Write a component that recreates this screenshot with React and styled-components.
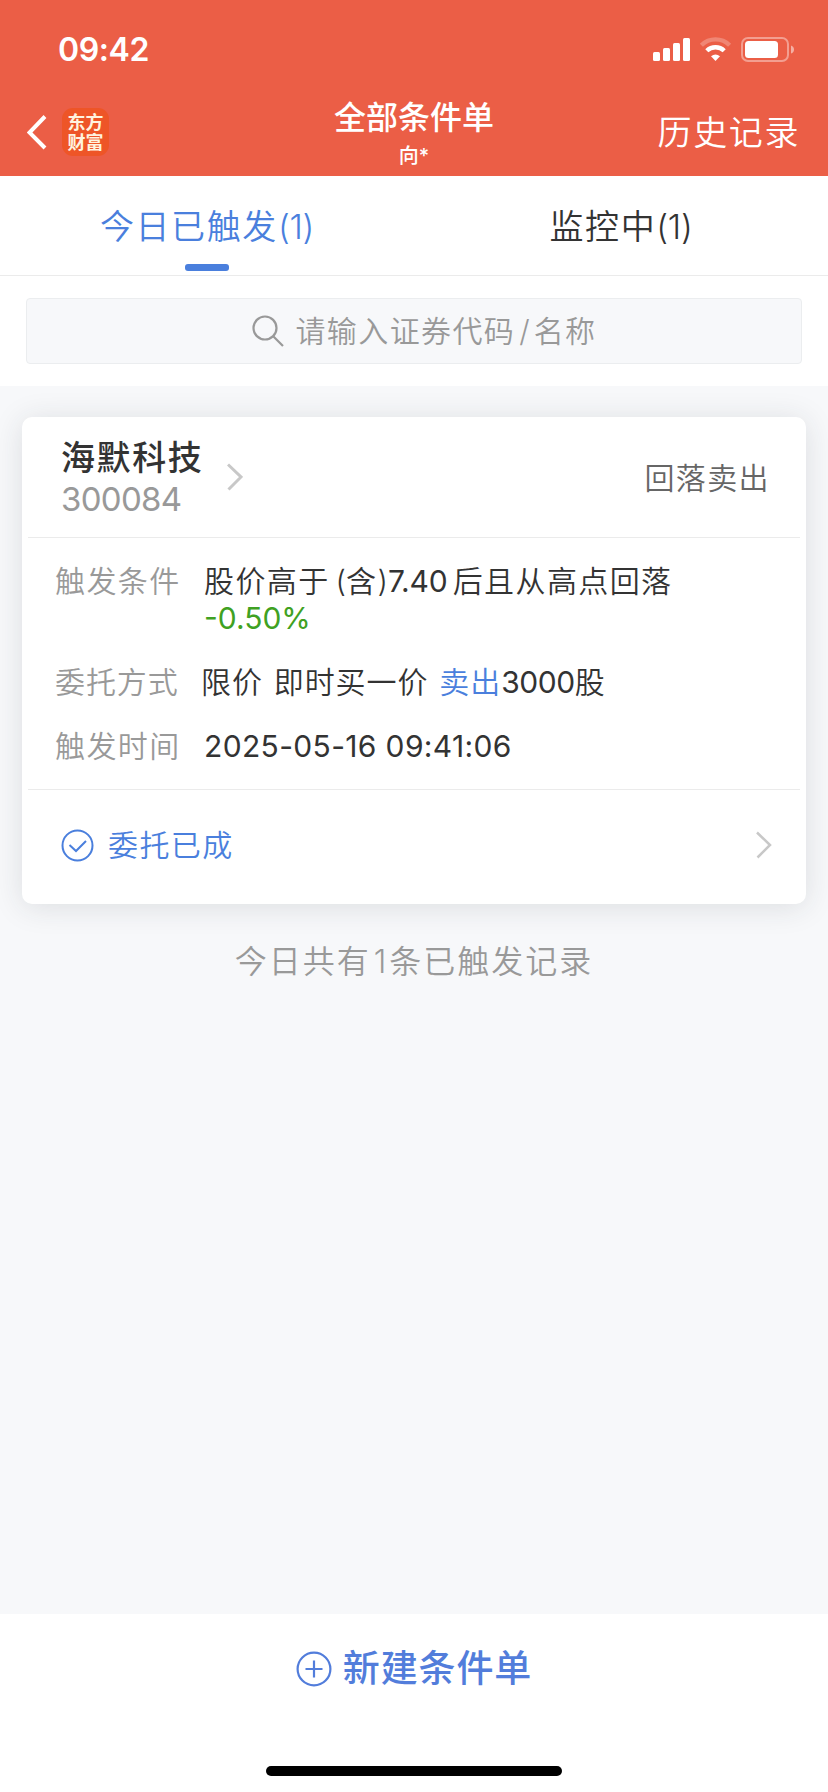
import styled, { createGlobalStyle } from "styled-components";

const GlobalStyle = createGlobalStyle`
  * { box-sizing: border-box; }
  body { margin: 0; background: #f7f8fa; font-family: Inter, "Noto Sans CJK SC", sans-serif; color: #333; }
`;

const Page = styled.div`
  height: 1792px; display: flex; flex-direction: column; overflow: hidden;
  white-space: nowrap;
`;

const Header = styled.header`
  flex: none; height: 176px; background: #eb5e46; color: #fff;
`;

const StatusBar = styled.div`
  display: flex; justify-content: space-between; height: 88px; padding: 37px 33px 0 58px;
`;

const Clock = styled.div`
  font-size: 32px; line-height: 25px; font-weight: 600; letter-spacing: -0.4px;
`;

const NavBar = styled.div`
  display: grid; grid-template-columns: 1fr 200px 1fr; height: 88px;
`;

const NavLeft = styled.div`
  display: flex; gap: 15px; padding: 20px 0 0 27px;
`;

const AppLogo = styled.div`
  width: 47px; height: 48px; border-radius: 11px; background: #ee5527; color: #fff3df;
  padding-top: 5px; text-align: center; font-size: 18px; line-height: 20px; font-weight: 700;
`;

const NavTitle = styled.div`
  text-align: center;
  h1 { margin: 11px 0 0; font-size: 32px; line-height: 38px; font-weight: 500; }
  p { margin: 7px 0 0; font-size: 20px; line-height: 24px; font-weight: 500; }
`;

const NavAction = styled.div`
  text-align: right; padding: 25px 28px 0 0; font-size: 34px; line-height: 40px;
  letter-spacing: 1.6px; font-weight: 350;
`;

const Tabs = styled.nav`
  flex: none; display: flex; height: 100px; background: #fff; border-bottom: 1px solid #ebebeb;
`;

const Tab = styled.div`
  flex: 1; display: flex; flex-direction: column; align-items: center; padding-top: 31px;
  font-size: 34px; line-height: 40px; font-weight: 350; color: ${(p) => (p.$active ? "#4a7fdd" : "#333")};
  &::after {
    content: ""; width: 44px; height: 7px; margin-top: 17px; border-radius: 3px;
    background: ${(p) => (p.$active ? "#4a7fdd" : "transparent")};
  }
`;

const SearchArea = styled.div`
  flex: none; height: 110px; padding: 22px 26px 0; background: #fff;
`;

const SearchBox = styled.div`
  height: 66px; border: 1px solid #ebedef; border-radius: 4px; background: #f7f8fa;
  display: flex; justify-content: center; gap: 11px; padding: 16px 0 0 21px;
  color: #999; font-size: 30px; line-height: 32px; font-weight: 350;
`;

const Content = styled.main`
  flex: 1; padding: 31px 22px 0;
`;

const Card = styled.section`
  height: 487px; padding: 0 6px; border-radius: 10px; background: #fff;
  box-shadow: 0 3px 30px rgba(40, 44, 52, 0.13);
`;

const CardHead = styled.div`
  display: flex; height: 121px; border-bottom: 1px solid #ebebeb; padding: 21px 30px 0 33px;
`;

const Stock = styled.div`
  width: 166px;
  .name { font-size: 34px; line-height: 40px; font-weight: 500; }
  .code { margin-top: 1px; font-size: 33px; line-height: 40px; color: #999; }
`;

const OrderType = styled.div`
  margin: 20px 0 0 auto; font-size: 30px; line-height: 40px; color: #666; font-weight: 350;
`;

const Details = styled.dl`
  margin: 0; height: 252px; border-bottom: 1px solid #ebebeb; padding: 25px 0 0 27px;
`;

const DetailRow = styled.div`
  display: flex; margin-bottom: 27px; font-size: 30px; line-height: 37px; font-weight: 350;
  dt { width: ${(p) => p.$labelWidth || 149}px; color: #999; }
  dd { margin: 0; }
`;

const Run = styled.span`
  letter-spacing: ${(p) => p.$spacing ?? 1.4}px;
  margin-left: ${(p) => p.$before || 0}px;
  color: ${(p) => p.$color || "inherit"};
`;

const Num = styled(Run)`
  font-weight: 400;
`;

const CardFoot = styled.div`
  display: flex; align-items: center; height: 110px; padding: 0 28px 0 33px;
  color: #4a7fdd; font-size: 30px; line-height: 40px; font-weight: 350;
  svg:last-child { margin-left: auto; }
`;

const Summary = styled.p`
  margin: 38px 0 0; text-align: center; font-size: 32px; line-height: 40px; color: #999; font-weight: 350;
`;

const BottomBar = styled.footer`
  flex: none; height: 178px; background: #fff; display: flex; flex-direction: column; align-items: center;
`;

const CreateButton = styled.div`
  display: flex; align-items: center; gap: 11px; margin-top: 33px; height: 44px;
  font-size: 37px; line-height: 44px; font-weight: 500; color: #527ddb;
`;

const HomeIndicator = styled.div`
  width: 296px; height: 10px; border-radius: 5px; background: #000; margin-top: 75px;
`;

const StatusIcons = () => (
  <svg width="142" height="26" viewBox="0 0 142 26" fill="#fff">
    <rect x="0" y="15" width="7" height="9" rx="1.5" />
    <rect x="10" y="11" width="7" height="13" rx="1.5" />
    <rect x="20" y="6" width="7" height="18" rx="1.5" />
    <rect x="30" y="1" width="7" height="23" rx="1.5" />
    <path d="M48.4 8.2a20 20 0 0 1 28.2 0" fill="none" stroke="#fff" strokeWidth="4.4" opacity="0.25" />
    <path d="M53.8 13.8a12.4 12.4 0 0 1 17.4 0" fill="none" stroke="#fff" strokeWidth="4.4" />
    <path d="M58 19.2q4.5-3.6 9 0L62.5 24z" />
    <rect x="89" y="1" width="46" height="23" rx="6" fill="none" stroke="#fff" strokeWidth="2" opacity="0.4" />
    <rect x="92" y="4" width="33" height="17" rx="3.5" />
    <path d="M138 8.500q3 1 3 4t-3 4z" opacity="0.5" />
  </svg>
);

const BackIcon = () => (
  <svg width="20" height="35" viewBox="0 0 20 35" style={{ marginTop: 7 }}>
    <path d="M18 1.500L2.500 17.500L18 33" fill="none" stroke="#fff" strokeWidth="4" />
  </svg>
);

const SearchIcon = () => (
  <svg width="32" height="32" viewBox="0 0 32 32" fill="none" stroke="#999" strokeWidth="2.2">
    <circle cx="13" cy="13" r="11.500" />
    <path d="M21 21l10 10" />
  </svg>
);

const Chevron = ({ top = 0, width = 3 }) => (
  <svg width="16" height="28" viewBox="0 0 16 28" style={{ marginTop: top }}>
    <path d="M1 1.500L14 14L1.500 26.500" fill="none" stroke="#c8c8c8" strokeWidth={width} />
  </svg>
);

const CheckIcon = () => (
  <svg width="33" height="33" viewBox="0 0 33 33" fill="none" stroke="#4a7fdd" strokeWidth="2">
    <circle cx="16.500" cy="16.500" r="15" />
    <path d="M8.500 16l6.500 6l10-10" />
  </svg>
);

const PlusIcon = () => (
  <svg width="36" height="36" viewBox="0 0 36 36" fill="none" stroke="#527ddb" strokeWidth="2.200">
    <circle cx="18" cy="18" r="16.400" />
    <path d="M9.500 18h17M18 9.500v17" />
  </svg>
);

export default function App() {
  return (
    <Page>
      <GlobalStyle />
      <Header>
        <StatusBar>
          <Clock>09:42</Clock>
          <StatusIcons />
        </StatusBar>
        <NavBar>
          <NavLeft>
            <BackIcon />
            <AppLogo>东方<br />财富</AppLogo>
          </NavLeft>
          <NavTitle>
            <h1>全部条件单</h1>
            <p>向*</p>
          </NavTitle>
          <NavAction>历史记录</NavAction>
        </NavBar>
      </Header>

      <Tabs>
        <Tab $active>
          <div><Run $spacing={1.6}>今日已触发</Run><Run $spacing={-0.3}>(1)</Run></div>
        </Tab>
        <Tab>
          <div><Run $spacing={1.6}>监控中</Run><Run $spacing={-0.3}>(1)</Run></div>
        </Tab>
      </Tabs>

      <SearchArea>
        <SearchBox>
          <SearchIcon />
          <Run as="div">请输入证券代码<Run $before={4} $spacing={4}>/</Run>名称</Run>
        </SearchBox>
      </SearchArea>

      <Content>
        <Card>
          <CardHead>
            <Stock>
              <div className="name"><Run $spacing={1.6}>海默科技</Run></div>
              <div className="code"><Run $spacing={-0.7}>300084</Run></div>
            </Stock>
            <Chevron top={25} />
            <OrderType><Run>回落卖出</Run></OrderType>
          </CardHead>
          <Details>
            <DetailRow>
              <dt><Run>触发条件</Run></dt>
              <dd>
                <Run>股价高于</Run>
                <Run $before={6} $spacing={0}>(</Run>
                <Run>含</Run>
                <Run $spacing={0}>)</Run>
                <Num $spacing={-0.1}>7.40</Num>
                <Run $before={5}>后且从高点回落</Run>
                <br />
                <Num $spacing={0} $color="#3fa122">-0.50%</Num>
              </dd>
            </DetailRow>
            <DetailRow $labelWidth={146}>
              <dt><Run $spacing={0.9}>委托方式</Run></dt>
              <dd>
                <Run $spacing={0.9}>限价</Run>
                <Run $before={11} $spacing={0.9}>即时买一价</Run>
                <Run $before={11} $spacing={0.9} $color="#4a7fdd">卖出</Run>
                <Num $spacing={-0.4}>3000</Num>
                <Run>股</Run>
              </dd>
            </DetailRow>
            <DetailRow>
              <dt><Run>触发时间</Run></dt>
              <dd><Num $spacing={0.35}>2025-05-16 09:41:06</Num></dd>
            </DetailRow>
          </Details>
          <CardFoot>
            <CheckIcon />
            <Run $before={14}>委托已成</Run>
            <Chevron width={2.5} />
          </CardFoot>
        </Card>
        <Summary>
          <Run $spacing={2}>今日共有</Run>
          <Run $before={3} $spacing={3}>1</Run>
          <Run $spacing={2}>条已触发记录</Run>
        </Summary>
      </Content>

      <BottomBar>
        <CreateButton>
          <PlusIcon />
          <Run $spacing={0.9}>新建条件单</Run>
        </CreateButton>
        <HomeIndicator />
      </BottomBar>
    </Page>
  );
}
